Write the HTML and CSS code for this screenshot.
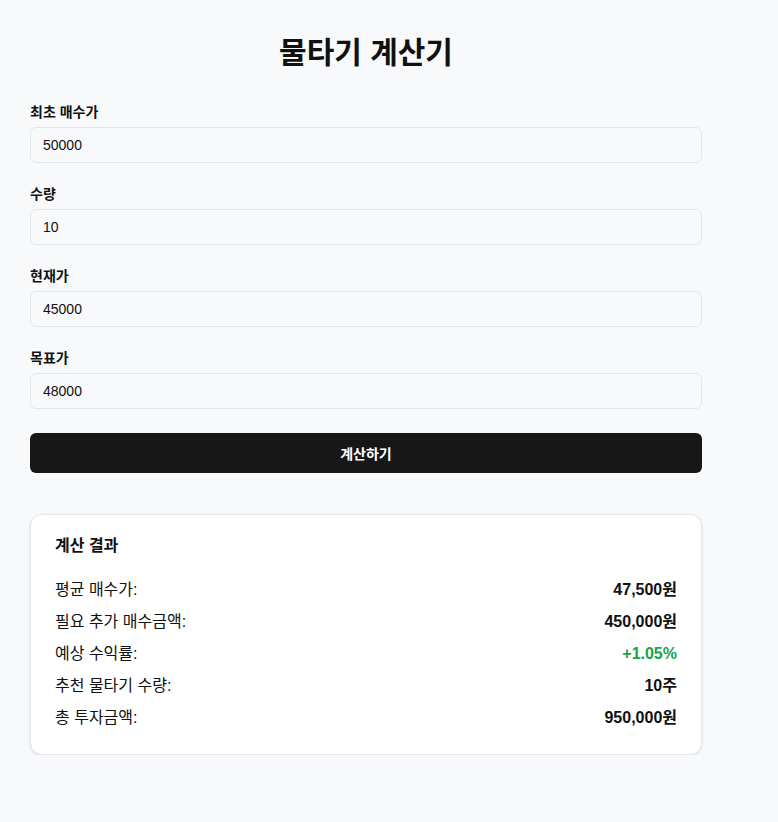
FILE: index.html
```html
<!DOCTYPE html>
<html lang="ko">
<head>
<meta charset="utf-8">
<link rel="stylesheet" href="styles.css">
</head>
<body>
<div class="container">
  <h1 class="title">물타기 계산기</h1>
  <div class="field">
    <label class="label">최초 매수가</label>
    <input class="input" type="text" value="50000">
  </div>
  <div class="field">
    <label class="label">수량</label>
    <input class="input" type="text" value="10">
  </div>
  <div class="field">
    <label class="label">현재가</label>
    <input class="input" type="text" value="45000">
  </div>
  <div class="field">
    <label class="label">목표가</label>
    <input class="input" type="text" value="48000">
  </div>
  <button class="btn">계산하기</button>
  <div class="card">
    <h2 class="card-title">계산 결과</h2>
    <div class="row"><span>평균 매수가:</span><span class="val">47,500원</span></div>
    <div class="row"><span>필요 추가 매수금액:</span><span class="val">450,000원</span></div>
    <div class="row"><span>예상 수익률:</span><span class="val green">+1.05%</span></div>
    <div class="row"><span>추천 물타기 수량:</span><span class="val">10주</span></div>
    <div class="row"><span>총 투자금액:</span><span class="val">950,000원</span></div>
  </div>
</div>
</body>
</html>
```
FILE: styles.css
```css
* { box-sizing: border-box; }
body {
  margin: 0;
  background: #f8f9fb;
  font-family: "Liberation Sans", "Noto Sans CJK KR", sans-serif;
  color: #111;
}
.container {
  width: 672px;
  margin-left: 30px;
  padding-top: 31px;
}
.title {
  margin: 0 0 27px;
  text-align: center;
  font-size: 30px;
  font-weight: 700;
  line-height: 44px;
}
.field {
  display: flex;
  flex-direction: column;
  margin-bottom: 21px;
}
.label {
  font-size: 14px;
  font-weight: 700;
  line-height: 20px;
  margin-bottom: 5px;
}
.input {
  height: 36px;
  border: 1px solid #e3e5e8;
  border-radius: 6px;
  background: #f8f9fb;
  padding: 0 12px;
  font-family: "Liberation Sans", sans-serif;
  font-size: 14px;
  color: #111;
}
.btn {
  display: block;
  width: 100%;
  height: 40px;
  margin-top: 24px;
  border: none;
  border-radius: 6px;
  background: #171717;
  color: #fff;
  font-family: "Liberation Sans", "Noto Sans CJK KR", sans-serif;
  font-size: 14px;
  font-weight: 700;
}
.card {
  margin-top: 41px;
  background: #fff;
  border: 1px solid #e5e7eb;
  border-radius: 12px;
  box-shadow: 0 1px 3px rgba(0,0,0,0.1);
  padding: 19px 24px 16px;
}
.card-title {
  margin: 0 0 20px;
  font-size: 16px;
  font-weight: 700;
  line-height: 24px;
}
.row {
  display: flex;
  justify-content: space-between;
  font-size: 16px;
  line-height: 24px;
  margin-bottom: 8px;
}
.val { font-weight: 700; }
.green { color: #16a34a; }
```
